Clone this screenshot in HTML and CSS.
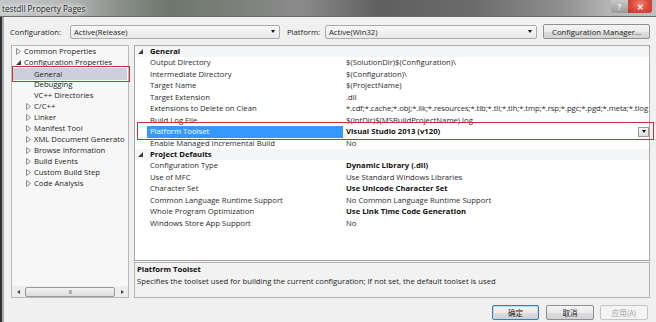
FILE: index.html
```html
<!DOCTYPE html>
<html>
<head>
<meta charset="utf-8">
<link rel="stylesheet" href="styles.css">
</head>
<body>
<div class="window">
  <div class="titlebar">
    <span class="title">testdll Property Pages</span>
    <div class="caption">
      <span class="help">?</span>
      <span class="close">✕</span>
    </div>
  </div>
  <div class="client">
    <div class="toolbar">
      <span class="lbl lbl-config">Configuration:</span>
      <div class="combo combo-config"><span>Active(Release)</span><i class="arrow"></i></div>
      <span class="lbl lbl-platform">Platform:</span>
      <div class="combo combo-platform"><span>Active(Win32)</span><i class="arrow"></i></div>
      <div class="btn btn-manager">Configuration Manager...</div>
    </div>
    <div class="main">
      <div class="tree">
        <div class="tree-list">
          <div class="ti l0"><span class="tw"><svg width="5" height="7" viewBox="0 0 5 7"><path d="M0.5 0.5 L4.5 3.5 L0.5 6.5 Z" fill="none" stroke="#8c8c8c"/></svg></span>Common Properties</div>
          <div class="ti l0"><span class="tw"><svg width="5" height="5" viewBox="0 0 5 5"><path d="M5 0 L5 5 L0 5 Z" fill="#3c3c3c"/></svg></span>Configuration Properties</div>
          <div class="ti l1 sel"><span class="tw"></span>General</div>
          <div class="ti l1"><span class="tw"></span>Debugging</div>
          <div class="ti l1"><span class="tw"></span>VC++ Directories</div>
          <div class="ti l1"><span class="tw"><svg width="5" height="7" viewBox="0 0 5 7"><path d="M0.5 0.5 L4.5 3.5 L0.5 6.5 Z" fill="none" stroke="#8c8c8c"/></svg></span>C/C++</div>
          <div class="ti l1"><span class="tw"><svg width="5" height="7" viewBox="0 0 5 7"><path d="M0.5 0.5 L4.5 3.5 L0.5 6.5 Z" fill="none" stroke="#8c8c8c"/></svg></span>Linker</div>
          <div class="ti l1"><span class="tw"><svg width="5" height="7" viewBox="0 0 5 7"><path d="M0.5 0.5 L4.5 3.5 L0.5 6.5 Z" fill="none" stroke="#8c8c8c"/></svg></span>Manifest Tool</div>
          <div class="ti l1"><span class="tw"><svg width="5" height="7" viewBox="0 0 5 7"><path d="M0.5 0.5 L4.5 3.5 L0.5 6.5 Z" fill="none" stroke="#8c8c8c"/></svg></span>XML Document Generato</div>
          <div class="ti l1"><span class="tw"><svg width="5" height="7" viewBox="0 0 5 7"><path d="M0.5 0.5 L4.5 3.5 L0.5 6.5 Z" fill="none" stroke="#8c8c8c"/></svg></span>Browse Information</div>
          <div class="ti l1"><span class="tw"><svg width="5" height="7" viewBox="0 0 5 7"><path d="M0.5 0.5 L4.5 3.5 L0.5 6.5 Z" fill="none" stroke="#8c8c8c"/></svg></span>Build Events</div>
          <div class="ti l1"><span class="tw"><svg width="5" height="7" viewBox="0 0 5 7"><path d="M0.5 0.5 L4.5 3.5 L0.5 6.5 Z" fill="none" stroke="#8c8c8c"/></svg></span>Custom Build Step</div>
          <div class="ti l1"><span class="tw"><svg width="5" height="7" viewBox="0 0 5 7"><path d="M0.5 0.5 L4.5 3.5 L0.5 6.5 Z" fill="none" stroke="#8c8c8c"/></svg></span>Code Analysis</div>
        </div>
        <div class="hscroll">
          <span class="sb-arrow"><i class="tri-left"></i></span>
          <span class="sb-track"><span class="sb-thumb">III</span></span>
          <span class="sb-arrow"><i class="tri-right"></i></span>
        </div>
      </div>
      <div class="right">
        <div class="grid">
          <div class="row cat"><span class="gut"><svg width="5" height="5" viewBox="0 0 5 5"><path d="M5 0 L5 5 L0 5 Z" fill="#3c3c3c"/></svg></span><span class="name">General</span></div>
          <div class="row"><span class="gut"></span><span class="name">Output Directory</span><span class="val">$(SolutionDir)$(Configuration)\</span></div>
          <div class="row"><span class="gut"></span><span class="name">Intermediate Directory</span><span class="val">$(Configuration)\</span></div>
          <div class="row"><span class="gut"></span><span class="name">Target Name</span><span class="val">$(ProjectName)</span></div>
          <div class="row"><span class="gut"></span><span class="name">Target Extension</span><span class="val">.dll</span></div>
          <div class="row"><span class="gut"></span><span class="name">Extensions to Delete on Clean</span><span class="val tight">*.cdf;*.cache;*.obj;*.ilk;*.resources;*.tlb;*.tli;*.tlh;*.tmp;*.rsp;*.pgc;*.pgd;*.meta;*.tlog</span></div>
          <div class="row"><span class="gut"></span><span class="name">Build Log File</span><span class="val">$(IntDir)$(MSBuildProjectName).log</span></div>
          <div class="row selrow"><span class="gut"></span><span class="name">Platform Toolset</span><span class="val b">Visual Studio 2013 (v120)</span><span class="dd"><i class="arrow"></i></span></div>
          <div class="row"><span class="gut"></span><span class="name">Enable Managed Incremental Build</span><span class="val">No</span></div>
          <div class="row cat"><span class="gut"><svg width="5" height="5" viewBox="0 0 5 5"><path d="M5 0 L5 5 L0 5 Z" fill="#3c3c3c"/></svg></span><span class="name">Project Defaults</span></div>
          <div class="row"><span class="gut"></span><span class="name">Configuration Type</span><span class="val b">Dynamic Library (.dll)</span></div>
          <div class="row"><span class="gut"></span><span class="name">Use of MFC</span><span class="val">Use Standard Windows Libraries</span></div>
          <div class="row"><span class="gut"></span><span class="name">Character Set</span><span class="val b">Use Unicode Character Set</span></div>
          <div class="row"><span class="gut"></span><span class="name">Common Language Runtime Support</span><span class="val">No Common Language Runtime Support</span></div>
          <div class="row"><span class="gut"></span><span class="name">Whole Program Optimization</span><span class="val b">Use Link Time Code Generation</span></div>
          <div class="row"><span class="gut"></span><span class="name">Windows Store App Support</span><span class="val">No</span></div>
        </div>
        <div class="desc">
          <div class="desc-title">Platform Toolset</div>
          <div class="desc-text">Specifies the toolset used for building the current configuration; If not set, the default toolset is used</div>
        </div>
      </div>
    </div>
    <div class="buttons">
      <div class="btn dbtn default">确定</div>
      <div class="btn dbtn">取消</div>
      <div class="btn dbtn disabled">应用(A)</div>
    </div>
  </div>
  <div class="mark mark-general"></div>
  <div class="mark mark-toolset"></div>
</div>
</body>
</html>
```

FILE: styles.css
```css
* { box-sizing: border-box; }
html, body { margin: 0; padding: 0; }
body {
  width: 656px;
  height: 322px;
  overflow: hidden;
  background: #f0f0f0;
  font-family: "Open Sans", "Noto Sans", sans-serif;
  font-size: 7.7px;
  color: #1e1e1e;
}
.window {
  position: relative;
  width: 656px;
  height: 322px;
  display: flex;
  flex-direction: column;
}
.titlebar {
  height: 17px;
  flex: none;
  display: flex;
  align-items: center;
  padding-left: 2px;
  background: linear-gradient(90deg, #c4c7c9 0, #b3b5b5 70px, #8a8f8a 120px, #6d776b 170px, #7d817c 240px, #8b8b8b 300px, #5f5f5f 380px, #6b6b6b 470px, #8e8e8e 560px, #b5b5b5 610px, #c0c0c0 656px);
  border-bottom: 1px solid #6a6a6a;
}
.title {
  font-size: 8.2px;
  color: #1a1a1a;
  text-shadow: 0 0 3px #ffffff, 0 0 5px #ffffff, 0 0 7px #ffffff;
}
.caption {
  margin-left: auto;
  align-self: flex-start;
  display: flex;
  height: 15px;
  margin-right: 4px;
}
.help {
  width: 17px;
  height: 13px;
  text-align: center;
  font-size: 8px;
  font-weight: bold;
  line-height: 13px;
  color: #f4f4f4;
  background: linear-gradient(180deg, #c8c8c8, #9a9a9a);
  border-radius: 0 0 0 3px;
}
.close {
  width: 24px;
  height: 13px;
  text-align: center;
  line-height: 13px;
  font-size: 8px;
  font-weight: bold;
  color: #ffffff;
  background: radial-gradient(ellipse at 50% 30%, #f08070 0, #d8473a 55%, #c03a36 100%);
  border-radius: 0 0 3px 0;
}
.client {
  flex: 1;
  display: flex;
  flex-direction: column;
  border-left: 2px solid #303030;
  background: linear-gradient(90deg, #a6abb1 0 2px, #f0f0f0 2px);
  padding: 7px 6px 0 8px;
}
.toolbar {
  height: 15px;
  display: flex;
  align-items: center;
}
.lbl { white-space: nowrap; }
.lbl-config { width: 60px; }
.lbl-platform { width: 38px; margin-left: 7px; }
.combo {
  height: 14px;
  border: 1px solid #acacac;
  border-radius: 2px;
  background: linear-gradient(180deg, #f8f8f8, #e9e9e9);
  display: flex;
  align-items: center;
  padding-left: 3px;
  padding-right: 4px;
}
.combo span { flex: 1; }
.combo-config { width: 210px; }
.combo-platform { width: 212px; }
.arrow {
  display: block;
  width: 0;
  height: 0;
  border-left: 2.5px solid transparent;
  border-right: 2.5px solid transparent;
  border-top: 3px solid #111;
}
.btn {
  height: 15px;
  border: 1px solid #8e8f8f;
  border-radius: 2px;
  background: linear-gradient(180deg, #f4f4f4 0, #ebebeb 50%, #dddddd 51%, #d3d3d3 100%);
  display: flex;
  align-items: center;
  justify-content: center;
  white-space: nowrap;
}
.btn-manager { width: 107px; margin-left: 6px; }
.main {
  margin-top: 6px;
  height: 253px;
  display: flex;
}
.tree {
  margin-left: 1px;
  width: 118px;
  height: 253px;
  border: 1px solid #b9b9b9;
  background: #f7f7f7;
  display: flex;
  flex-direction: column;
}
.tree-list { flex: 1; overflow: hidden; }
.ti {
  height: 11px;
  line-height: 11px;
  white-space: nowrap;
  overflow: hidden;
  display: flex;
  align-items: center;
  color: #1e1e1e;
}
.ti.l0 { padding-left: 3px; }
.ti.l1 { padding-left: 13px; }
.tw {
  width: 9px;
  flex: none;
  display: flex;
  align-items: center;
  padding-left: 1px;
}
.tw svg { display: block; }
.ti.sel {
  background: #cdd0dc;
  margin: 0 1px;
  padding-left: 12px;
  height: 12px;
  margin-bottom: -1px;
}
.hscroll {
  height: 11px;
  flex: none;
  display: flex;
  align-items: center;
  background: #ededed;
  padding: 0 1px;
}
.sb-arrow {
  width: 10px;
  height: 10px;
  display: flex;
  align-items: center;
  justify-content: center;
}
.tri-left {
  width: 0; height: 0;
  border-top: 2.5px solid transparent;
  border-bottom: 2.5px solid transparent;
  border-right: 3px solid #444;
}
.tri-right {
  width: 0; height: 0;
  border-top: 2.5px solid transparent;
  border-bottom: 2.5px solid transparent;
  border-left: 3px solid #444;
}
.sb-track { flex: 1; height: 10px; padding: 0 2px; }
.sb-thumb {
  display: flex;
  height: 10px;
  align-items: center;
  justify-content: center;
  border: 1px solid #9a9a9a;
  border-radius: 2px;
  background: linear-gradient(180deg, #f4f4f4, #dcdcdc);
  font-size: 5px;
  color: #555;
  letter-spacing: -0.5px;
}
.right {
  margin-left: 5px;
  width: 516px;
  display: flex;
  flex-direction: column;
}
.grid {
  height: 216px;
  border: 1px solid #a9a9a9;
  background: #ffffff;
  overflow: hidden;
}
.row {
  height: 11.45px;
  line-height: 11.45px;
  display: flex;
  white-space: nowrap;
}
.gut {
  width: 12px;
  flex: none;
  display: flex;
  align-items: center;
  padding-left: 3px;
}
.gut svg { display: block; }
.name {
  width: 196px;
  flex: none;
  padding-left: 3px;
  overflow: hidden;
  color: #2a2a2a;
}
.val {
  flex: 1;
  padding-left: 3px;
  overflow: hidden;
  color: #2a2a2a;
}
.val.tight { letter-spacing: -0.08px; }
.b { font-weight: bold; color: #111; }
.row.cat { background: #f4f5f6; }
.row.cat .name { font-weight: bold; color: #111; width: auto; }
.selrow .name { background: #3399ff; color: #ffffff; }
.dd {
  width: 11px;
  height: 10px;
  margin-top: 0.7px;
  flex: none;
  border: 1px solid #9a9a9a;
  background: linear-gradient(180deg, #f6f6f6, #dedede);
  display: flex;
  align-items: center;
  justify-content: center;
}
.desc {
  margin-top: 1px;
  height: 36px;
  border: 1px solid #b4b4b4;
  background: #f2f2f2;
  padding: 1px 0 0 2px;
}
.desc-title { font-weight: bold; line-height: 11px; color: #111; }
.desc-text { line-height: 12px; color: #222; }
.buttons {
  margin-top: 7px;
  display: flex;
  justify-content: flex-end;
  padding-right: 2px;
  gap: 6px;
}
.dbtn {
  width: 48px;
  height: 15px;
  font-family: "Noto Sans CJK SC", sans-serif;
  font-size: 7.5px;
}
.dbtn.default { border-color: #3c7fb1; box-shadow: inset 0 0 0 1px #b8d9ef; width: 47px; margin-right: 1px; }
.dbtn.disabled { color: #a0a0a0; border-color: #c4c4c4; background: #f4f4f4; }
.mark {
  position: absolute;
  border: 1px solid #c9303e;
}
.mark-general { left: 12px; top: 66px; width: 118px; height: 16px; }
.mark-toolset { left: 137px; top: 122px; width: 517px; height: 18px; }
```
